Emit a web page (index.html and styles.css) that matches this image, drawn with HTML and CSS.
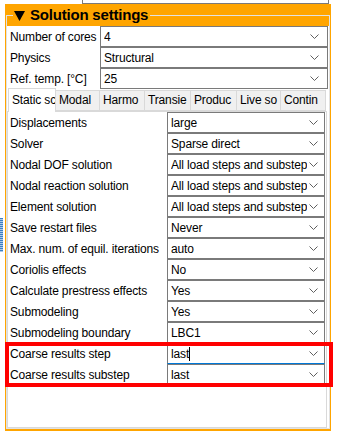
FILE: index.html
```html
<html>

<head>
    <link rel="stylesheet" href="styles.css">
</head>

<body>
    <div class="grip"></div>
    <div class="stub"><div class="stub-box"></div></div>

    <div class="panel">
        <fieldset class="settings">
            <legend><svg class="tri" width="11" height="10" viewBox="0 0 11 10"><polygon points="0,0 11,0 5.5,10" fill="#000"/></svg>Solution settings</legend>
            <div class="body">
                <div class="grid top">
                    <div class="label">Number of cores</div>
                    <div class="combo"><span>4</span><svg class="chev" width="9" height="5" viewBox="0 0 9 5"><polyline points="0.5,0.5 4.5,4.5 8.5,0.5"/></svg></div>
                    <div class="label">Physics</div>
                    <div class="combo"><span>Structural</span><svg class="chev" width="9" height="5" viewBox="0 0 9 5"><polyline points="0.5,0.5 4.5,4.5 8.5,0.5"/></svg></div>
                    <div class="label">Ref. temp. [°C]</div>
                    <div class="combo"><span>25</span><svg class="chev" width="9" height="5" viewBox="0 0 9 5"><polyline points="0.5,0.5 4.5,4.5 8.5,0.5"/></svg></div>
                </div>

                <div class="tabs">
                    <div class="tab active w48">Static sc</div>
                    <div class="tab w44">Modal</div>
                    <div class="tab w45">Harmo</div>
                    <div class="tab w46">Transie</div>
                    <div class="tab w46">Produc</div>
                    <div class="tab w44">Live so</div>
                    <div class="tab w45">Contin</div>
                </div>

                <div class="pane">
                    <div class="grid props" id="props"></div>
                </div>
            </div>
        </fieldset>
    </div>

    <div class="mark"></div>

    <script>
        var rows = [
            ["Displacements", "large"],
            ["Solver", "Sparse direct"],
            ["Nodal DOF solution", "All load steps and substep"],
            ["Nodal reaction solution", "All load steps and substep"],
            ["Element solution", "All load steps and substep"],
            ["Save restart files", "Never"],
            ["Max. num. of equil. iterations", "auto"],
            ["Coriolis effects", "No"],
            ["Calculate prestress effects", "Yes"],
            ["Submodeling", "Yes"],
            ["Submodeling boundary", "LBC1"],
            ["Coarse results step", "last"],
            ["Coarse results substep", "last"]
        ];
        var chev = '<svg class="chev" width="9" height="5" viewBox="0 0 9 5"><polyline points="0.5,0.5 4.5,4.5 8.5,0.5"/></svg>';
        var html = "";
        for (var i = 0; i < rows.length; i++) {
            var focus = (i == 11);
            html += '<div class="label">' + rows[i][0] + '</div>';
            html += '<div class="combo' + (focus ? ' focus' : '') + '"><span>' + rows[i][1] +
                (focus ? '<i class="caret"></i>' : '') + '</span>' + chev + '</div>';
        }
        document.getElementById("props").innerHTML = html;
    </script>
</body>

</html>
```

FILE: styles.css
```css
body {
    margin: 0;
    width: 343px;
    height: 434px;
    background: #fff;
    font-family: 'Liberation Sans', Arial, sans-serif;
    font-size: 12px;
    letter-spacing: -0.15px;
    color: #000;
    position: relative;
    overflow: hidden;
}
.stub {
    height: 4px;
}
.stub-box {
    margin-left: 82px;
    width: 247px;
    height: 4px;
    box-sizing: border-box;
    border: 1px solid #7a7a7a;
    border-top: none;
}
.panel {
    margin-left: 5px;
    width: 326px;
    box-sizing: border-box;
    background: #ffa500;
    padding: 0 1px 2px 1px;
}
.settings {
    margin: 0;
    padding: 0;
    min-width: 0;
    border: 1px solid #e2e2e2;
}
.settings legend {
    margin-left: 6px;
    padding: 0 2px 0 1px;
    height: 22px;
    line-height: 22px;
    font-size: 15px;
    font-weight: bold;
    letter-spacing: -0.2px;
}
.tri {
    vertical-align: -1px;
    margin-right: 5px;
}
.body {
    background: #fff;
}
.grid {
    display: grid;
    grid-auto-rows: 21px;
}
.top {
    grid-template-columns: 93px 228px;
}
.props {
    grid-template-columns: 159px 158px;
}
.label {
    display: flex;
    align-items: center;
    padding-left: 2px;
    white-space: nowrap;
    overflow: hidden;
}
.top .label {
    padding-left: 3px;
}
.combo {
    display: flex;
    align-items: center;
    box-sizing: border-box;
    border: 1px solid #7a7a7a;
    padding: 0 6px 0 3px;
    background: #fff;
}
.top .combo {
    padding-right: 8px;
}
.combo span {
    flex: 1;
    white-space: nowrap;
    overflow: hidden;
}
.combo.focus {
    border-bottom-color: #0078d7;
}
.caret {
    display: inline-block;
    width: 1px;
    height: 14px;
    background: #000;
    vertical-align: -3px;
}
.chev {
    flex: none;
    margin-left: 2px;
}
.chev polyline {
    fill: none;
    stroke: #606060;
    stroke-width: 1;
}
.tabs {
    display: flex;
    align-items: flex-end;
    height: 22px;
    margin-left: 1px;
}
.tab {
    box-sizing: border-box;
    height: 21px;
    line-height: 19px;
    padding-left: 3px;
    background: #f0f0f0;
    border: 1px solid #d9d9d9;
    border-left: none;
    white-space: nowrap;
    overflow: hidden;
}
.tab.active {
    height: 24px;
    margin-bottom: -1px;
    background: #fff;
    border-left: 1px solid #d9d9d9;
    border-bottom: none;
    line-height: 22px;
    position: relative;
    z-index: 1;
}
.w44 { width: 44px; }
.w45 { width: 45px; }
.w46 { width: 46px; }
.w48 { width: 48px; }
.pane {
    width: 320px;
    height: 317px;
    box-sizing: border-box;
    border: 1px solid #d9d9d9;
}
.grip {
    position: absolute;
    left: 0;
    top: 218px;
    width: 3px;
    height: 34px;
    background: repeating-linear-gradient(#3c7fc4 0 1px, #a9c8ea 1px 2px);
}
.mark {
    position: absolute;
    left: 5px;
    top: 342px;
    width: 328px;
    height: 45px;
    box-sizing: border-box;
    border: 4px solid #ff0000;
}
```
